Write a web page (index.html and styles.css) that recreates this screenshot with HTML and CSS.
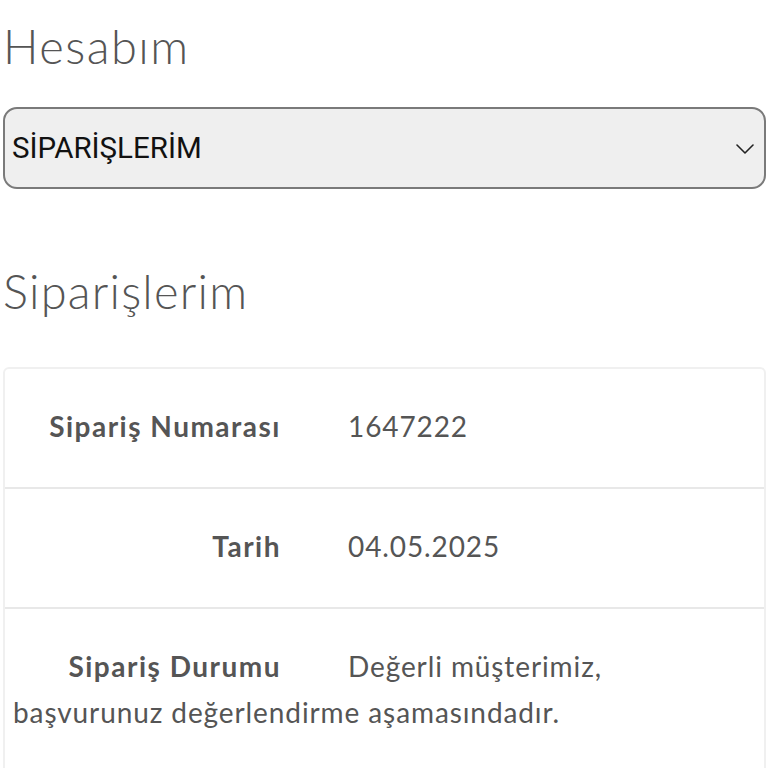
FILE: index.html
```html
<!DOCTYPE html>
<html lang="tr">
<head>
<meta charset="utf-8">
<link rel="stylesheet" href="styles.css">
</head>
<body>
<main class="page">
  <h1 class="title">Hesabım</h1>
  <div class="select">
    <span class="select-text">SİPARİŞLERİM</span>
    <svg class="chevron" viewBox="0 0 18 10" width="18" height="10"><path d="M1 1 L9 9 L17 1" fill="none" stroke="#222" stroke-width="1.6" stroke-linecap="round" stroke-linejoin="round"/></svg>
  </div>
  <h2 class="subtitle">Siparişlerim</h2>
  <div class="card">
    <div class="row"><span class="label">Sipariş Numarası</span><span class="value">1647222</span></div>
    <div class="row"><span class="label">Tarih</span><span class="value">04.05.2025</span></div>
    <div class="row"><span class="label">Sipariş Durumu</span><span class="value">Değerli müşterimiz, başvurunuz değerlendirme aşamasındadır.</span></div>
  </div>
</main>
</body>
</html>
```
FILE: styles.css
```css
html, body { margin: 0; padding: 0; background: #fff; }
body { font-family: Lato, "Open Sans", sans-serif; color: #555; }
.page { padding: 0 2px 0 3px; }
.title {
  margin: 0;
  padding-top: 18px;
  font-size: 47px;
  font-weight: 300;
  line-height: 56px;
  letter-spacing: 1.5px;
  color: #555;
}
.select {
  margin-top: 33px;
  height: 78px;
  border: 2px solid #7a7a7a;
  border-radius: 14px;
  background: #efefef;
  display: flex;
  align-items: center;
  justify-content: space-between;
  padding: 0 10px 0 7px;
}
.select-text {
  font-family: Roboto, "Liberation Sans", sans-serif;
  font-size: 29.5px;
  color: #111;
}
.chevron { margin-top: 2px; }
.subtitle {
  margin: 0;
  padding-top: 74px;
  font-size: 47px;
  font-weight: 300;
  line-height: 56px;
  letter-spacing: 1.2px;
  color: #555;
}
.card {
  margin-top: 48px;
  border: 2px solid #f0f0f0;
  border-radius: 6px;
}
.row {
  padding: 34px 8px 38px 8px;
  font-size: 28px;
  line-height: 46px;
  border-top: 2px solid #e8e8e8;
}
.row:first-child { border-top: none; }
.label {
  display: inline-block;
  width: 268px;
  margin-right: 67px;
  text-align: right;
  font-weight: 700;
  letter-spacing: 1.5px;
  color: #555;
}
.value { color: #555; letter-spacing: 0.9px; }
```
